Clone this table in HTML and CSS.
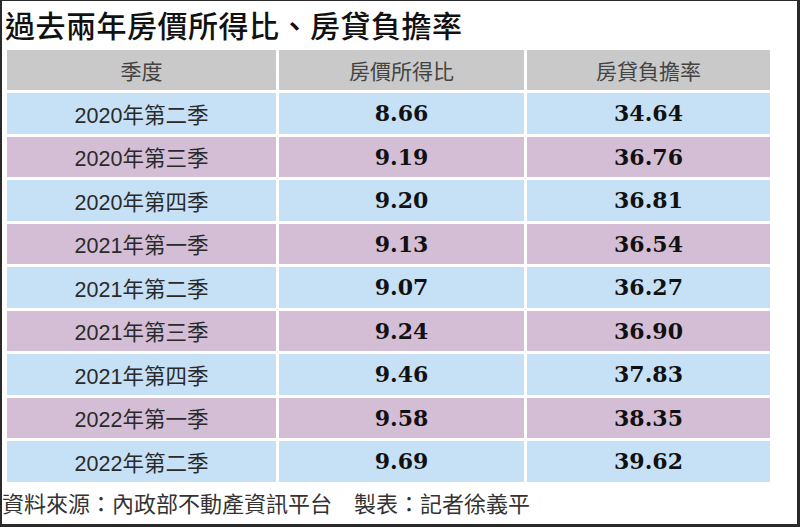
FILE: index.html
```html
<!DOCTYPE html>
<html lang="zh-Hant">
<head>
<meta charset="utf-8">
<title>過去兩年房價所得比、房貸負擔率</title>
<link rel="stylesheet" href="styles.css">
</head>
<body>
<div class="frame">
  <h1 class="title">過去兩年房價所得比、房貸負擔率</h1>
  <div class="table">
    <div class="cell head">季度</div>
    <div class="cell head">房價所得比</div>
    <div class="cell head">房貸負擔率</div>

    <div class="cell blue q">2020年第二季</div>
    <div class="cell blue num">8.66</div>
    <div class="cell blue num">34.64</div>

    <div class="cell purple q">2020年第三季</div>
    <div class="cell purple num">9.19</div>
    <div class="cell purple num">36.76</div>

    <div class="cell blue q">2020年第四季</div>
    <div class="cell blue num">9.20</div>
    <div class="cell blue num">36.81</div>

    <div class="cell purple q">2021年第一季</div>
    <div class="cell purple num">9.13</div>
    <div class="cell purple num">36.54</div>

    <div class="cell blue q">2021年第二季</div>
    <div class="cell blue num">9.07</div>
    <div class="cell blue num">36.27</div>

    <div class="cell purple q">2021年第三季</div>
    <div class="cell purple num">9.24</div>
    <div class="cell purple num">36.90</div>

    <div class="cell blue q">2021年第四季</div>
    <div class="cell blue num">9.46</div>
    <div class="cell blue num">37.83</div>

    <div class="cell purple q">2022年第一季</div>
    <div class="cell purple num">9.58</div>
    <div class="cell purple num">38.35</div>

    <div class="cell blue q">2022年第二季</div>
    <div class="cell blue num">9.69</div>
    <div class="cell blue num">39.62</div>
  </div>
  <p class="footer">資料來源：內政部不動產資訊平台　製表：記者徐義平</p>
</div>
</body>
</html>
```

FILE: styles.css
```css
html, body {
  margin: 0;
  padding: 0;
  background: #ffffff;
}

.frame {
  box-sizing: border-box;
  width: 800px;
  height: 527px;
  border-top: 1px solid #2a2a2a;
  border-left: 2px solid #2a2a2a;
  border-right: 3px solid #2a2a2a;
  border-bottom: 3px solid #2a2a2a;
  background: #ffffff;
  display: flex;
  flex-direction: column;
}

.title {
  margin: 0;
  height: 49px;
  padding-left: 3px;
  font-family: "Noto Sans CJK TC", "Noto Sans", sans-serif;
  font-weight: 500;
  font-size: 30px;
  line-height: 46px;
  color: #111111;
  letter-spacing: 0.5px;
}

.table {
  margin-left: 5px;
  display: grid;
  grid-template-columns: 269px 245px 243px;
  grid-template-rows: 40px repeat(9, 40.5px);
  gap: 3px;
}

.cell {
  display: flex;
  align-items: center;
  justify-content: center;
}

.head {
  background: #c9c9c9;
  font-family: "Noto Sans CJK TC", sans-serif;
  font-size: 21px;
  color: #444444;
}

.blue {
  background: #c6e0f5;
}

.purple {
  background: #d4bed6;
}

.q {
  font-family: "Liberation Sans", "Noto Sans CJK TC", sans-serif;
  font-size: 21.5px;
  color: #2a2a2a;
}

.num {
  font-family: "DejaVu Serif", serif;
  font-weight: 700;
  font-size: 22px;
  color: #111111;
}

.footer {
  margin: 6px 0 0 0;
  padding-left: 0;
  font-family: "Noto Sans CJK TC", sans-serif;
  font-size: 22px;
  line-height: 28px;
  color: #333333;
}
```
